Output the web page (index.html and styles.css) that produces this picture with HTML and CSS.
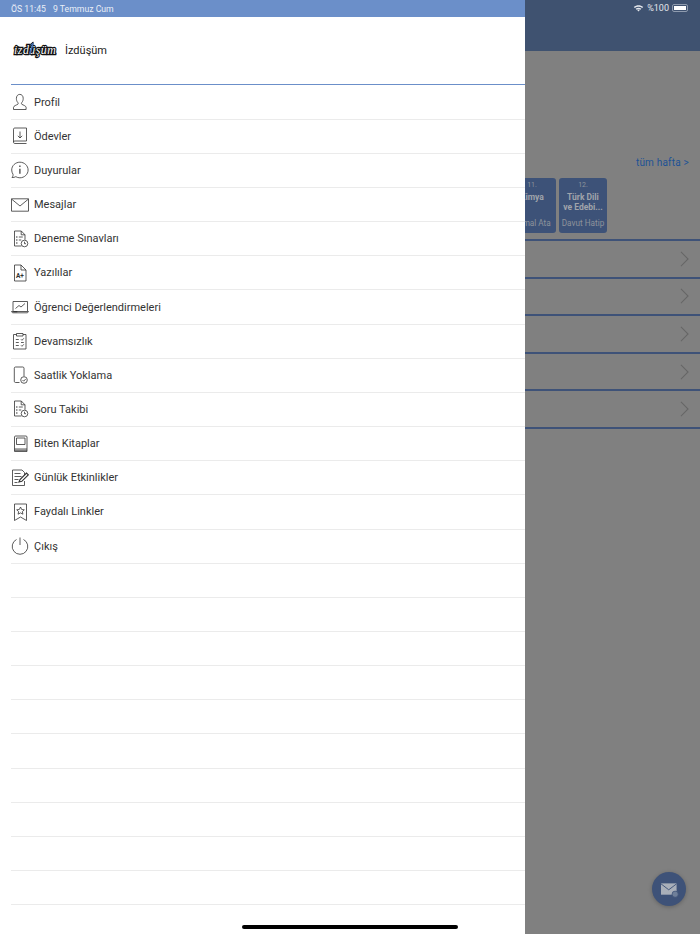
FILE: index.html
```html
<!DOCTYPE html>
<html lang="tr">
<head>
  <meta charset="UTF-8" />
  <meta name="viewport" content="width=device-width, initial-scale=1.0"/>
  <title>İzdüşüm</title>
  <link rel="stylesheet" href="styles.css">
</head>
<body>
  <div class="screen">

    <!-- arka plandaki sayfa -->
    <main class="page">
      <header class="page-top">
        <div class="status-right">
          <svg class="wifi" viewBox="0 0 14 10"><path d="M1 3.6C4.4.6 9.6.6 13 3.6l-1.3 1.4C9 2.8 5 2.8 2.3 5z"/><path d="M3.3 6c2.2-1.9 5.2-1.9 7.4 0L9.4 7.3c-1.4-1.1-3.4-1.1-4.8 0z"/><path d="M5.5 8 7 6.9 8.5 8 7 9.6z"/></svg>
          <span>%100</span>
          <span class="battery"><i></i></span>
        </div>
      </header>

      <a class="week-link">tüm hafta &gt;</a>

      <div class="lessons">
        <div class="lesson">
          <span class="lesson-no">11.</span>
          <strong>Kimya</strong>
          <span class="lesson-teacher">Kemal Ata</span>
        </div>
        <div class="lesson">
          <span class="lesson-no">12.</span>
          <strong>Türk Dili<br>ve Edebi...</strong>
          <span class="lesson-teacher">Davut Hatip</span>
        </div>
      </div>

      <div class="page-list">
        <div class="page-row"><svg viewBox="0 0 10 18"><path d="M1 1l8 8-8 8"/></svg></div>
        <div class="page-row"><svg viewBox="0 0 10 18"><path d="M1 1l8 8-8 8"/></svg></div>
        <div class="page-row"><svg viewBox="0 0 10 18"><path d="M1 1l8 8-8 8"/></svg></div>
        <div class="page-row"><svg viewBox="0 0 10 18"><path d="M1 1l8 8-8 8"/></svg></div>
        <div class="page-row"><svg viewBox="0 0 10 18"><path d="M1 1l8 8-8 8"/></svg></div>
      </div>
    </main>

    <button class="fab">
      <svg viewBox="0 0 20 18">
        <path class="fab-mail" d="M1 2.5h16.500v12H1z"/>
        <path class="fab-flap" d="M1 3l8.200 6.300L17.500 3"/>
        <circle class="fab-plus" cx="16" cy="14" r="3.300"/>
      </svg>
    </button>

    <!-- sol menü -->
    <aside class="drawer">
      <div class="status-left"><span>ÖS 11:45</span><span>9 Temmuz Cum</span></div>

      <div class="drawer-head">
        <svg class="logo" viewBox="0 0 46 20">
          <path class="logo-wing" d="M3 5l9 4 9-8-1 14-5-3-8 1z"/>
          <text class="logo-text" x="1" y="14">izdüşüm</text>
          <path class="logo-slash" d="M21 2 17.500 14"/>
        </svg>
        <span>İzdüşüm</span>
      </div>

      <ul class="menu">
        <li>
          <svg viewBox="0 0 18 18"><path d="M2.500 16.500v-2.200c0-1.300 3-2.300 4.300-3 .5-.3.500-1.300 0-1.800C5.700 8.300 5.400 6.800 5.400 5.300 5.400 3 6.800 1.400 8.800 1.400s3.400 1.600 3.400 3.900c0 1.500-.3 3-1.400 4.200-.5.500-.5 1.500 0 1.800 1.300.7 4.300 1.700 4.300 3v2.200z"/></svg>
          <span>Profil</span>
        </li>
        <li>
          <svg viewBox="0 0 18 18"><path d="M2.500 15V2.200C2.500 1.500 3 1 3.700 1h11.800v13H3.700c-.7 0-1.200.5-1.200 1.200s.5 1.300 1.200 1.300h11.800"/><path d="M9 4.500v6.500M6.800 8.800 9 11l2.200-2.200"/></svg>
          <span>Ödevler</span>
        </li>
        <li>
          <svg viewBox="0 0 18 18"><path d="M1 16.500c1-1.200 1.200-2.200 1-3.200C1.200 12 .7 10.600.7 9c0-4.300 3.700-7.800 8.200-7.800s8.200 3.500 8.200 7.800-3.700 7.800-8.200 7.800c-1.500 0-2.900-.4-4.100-1.100-1.100.6-2.400.9-3.800.8z"/><path class="heavy" d="M8.900 7.800v5M8.900 4.600v1.400"/></svg>
          <span>Duyurular</span>
        </li>
        <li>
          <svg viewBox="0 0 18 18"><path d="M.5 2.800h17v12.400H.5z"/><path d="M.7 3.200 9 10l8.300-6.800"/></svg>
          <span>Mesajlar</span>
        </li>
        <li>
          <svg viewBox="0 0 18 18"><path d="M10.500 16H3.500V1h6.800l3.700 3.800v5"/><path d="M10.200 1v3.800H14"/><path class="heavy" d="M5 7h1.500M5 10h1.500M5 13h1.500"/><path d="M7.800 7h4M7.800 10h2.500"/><circle cx="13.500" cy="13.500" r="3.300"/><path d="M13.500 11.700v2h1.500"/></svg>
          <span>Deneme Sınavları</span>
        </li>
        <li>
          <svg viewBox="0 0 18 18"><path d="M3.500 17V1h6.500l5 5v11z"/><path d="M10 1v5h5"/><text class="icon-text" x="5" y="14">A+</text></svg>
          <span>Yazılılar</span>
        </li>
        <li>
          <svg viewBox="0 0 18 18"><path d="M2 13V3.500h14.500V13"/><path d="M.5 13.500h17l-1 1.300H1.500z"/><path class="heavy" d="M2.300 13.700h4"/><path d="M4.500 10.500 8 7.500l2 1.500 4-3.500"/></svg>
          <span>Öğrenci Değerlendirmeleri</span>
        </li>
        <li>
          <svg viewBox="0 0 18 18"><path d="M5.500 2.500H2.500v14.500h12.500V2.500h-3"/><path d="M5.500 1.500h6.500v2.500H5.500z"/><path d="M4.800 7.500h3M4.800 10.500h3M4.800 13.500h3M10 7.300l1 1 1.800-2M10 13.300l1 1 1.800-2M10 10.500h2.800"/></svg>
          <span>Devamsızlık</span>
        </li>
        <li>
          <svg viewBox="0 0 18 18"><path d="M8.500 16.500H4.500c-.7 0-1.200-.5-1.200-1.200V2.200C3.300 1.500 3.800 1 4.500 1h7.300c.7 0 1.200.5 1.200 1.200v8"/><circle cx="13" cy="14" r="3.300"/><path d="M11.500 14l1.200 1.200 2-2.200"/></svg>
          <span>Saatlik Yoklama</span>
        </li>
        <li>
          <svg viewBox="0 0 18 18"><path d="M10.500 16H3.500V1h6.800l3.700 3.800v5"/><path d="M10.200 1v3.800H14"/><path class="heavy" d="M5 7h1.500M5 10h1.500M5 13h1.500"/><path d="M7.800 7h4M7.800 10h2.500"/><circle cx="13.500" cy="13.500" r="3.300"/><path d="M13.500 11.700v2h1.500"/></svg>
          <span>Soru Takibi</span>
        </li>
        <li>
          <svg viewBox="0 0 18 18"><path d="M3.500 14V2c0-.6.400-1 1-1h10.500c.6 0 1 .4 1 1v12z"/><path d="M5.500 3h8.500v6.500H5.500z"/><path d="M3.500 14v2.500h12.500V14M3.500 15.300h12.500"/></svg>
          <span>Biten Kitaplar</span>
        </li>
        <li>
          <svg viewBox="0 0 18 18"><path d="M13.500 6V3.500L11 1H1.500v15.500h12V12"/><path d="M3.500 4.500h6M3.500 7.500h7M3.500 10.500h4M3.500 13.500h3"/><path class="heavy" d="M8 13l1-2.500 6.500-6.500 1.800 1.800-6.500 6.500z"/></svg>
          <span>Günlük Etkinlikler</span>
        </li>
        <li>
          <svg viewBox="0 0 18 18"><path d="M3.500 1h12v16.500l-6-3.500-6 3.500z"/><path d="M9.500 4l1.200 2.500 2.600.3-1.900 1.800.5 2.600-2.400-1.300-2.400 1.300.5-2.600-1.900-1.800 2.600-.3z"/></svg>
          <span>Faydalı Linkler</span>
        </li>
        <li>
          <svg viewBox="0 0 18 18"><path d="M5.500 2.500a7.800 7.800 0 1 0 7 0"/><path d="M9 .5v7.500"/></svg>
          <span>Çıkış</span>
        </li>
        <li></li><li></li><li></li><li></li><li></li>
        <li></li><li></li><li></li><li></li><li></li>
      </ul>
    </aside>

    <div class="home-bar"></div>
  </div>
</body>
</html>
```

FILE: styles.css
```css
body {
  margin: 0;
  padding: 0;
  background-color: #808080;
  font-family: Roboto, Inter, "Noto Sans", Arial, sans-serif;
}

.screen {
  position: relative;
  width: 700px;
  height: 934px;
  overflow: hidden;
  background-color: #808080;
}

/* Arka plan */
.page-top {
  height: 51px;
  background-color: #3f5270;
  box-sizing: border-box;
  padding: 2px 12px 0 0;
}

.status-right {
  display: flex;
  justify-content: flex-end;
  align-items: center;
  gap: 3px;
  height: 12px;
  color: #e3e6eb;
  font-size: 9px;
}

.wifi {
  width: 11px;
  height: 8px;
  fill: #e3e6eb;
}

.battery {
  display: block;
  width: 16px;
  height: 8px;
  padding: 1px;
  border: 1px solid #8f9bae;
  border-radius: 2px;
  box-sizing: border-box;
}

.battery i {
  display: block;
  height: 100%;
  background-color: #fff;
}

.week-link {
  display: block;
  margin-top: 105px;
  padding-right: 11px;
  height: 22px;
  text-align: right;
  font-size: 10px;
  line-height: 13px;
  letter-spacing: 0.2px;
  color: #1c5296;
}

.lessons {
  display: flex;
  justify-content: flex-end;
  gap: 3px;
  padding-right: 93px;
}

.lesson {
  width: 48px;
  height: 55px;
  box-sizing: border-box;
  padding: 2px 2px 0;
  border-radius: 3px;
  background-color: #3d5278;
  color: #8e939b;
  text-align: center;
  font-size: 8.2px;
  line-height: 10px;
  display: flex;
  flex-direction: column;
  align-items: center;
}

.lesson-no {
  font-size: 7px;
}

.lesson strong {
  font-size: 8.5px;
  line-height: 10px;
  height: 21px;
  margin-top: 2px;
  color: #a0a4ab;
  white-space: nowrap;
}

.lesson-teacher {
  margin-top: 5px;
  white-space: nowrap;
}

.page-list {
  margin-top: 6px;
  border-top: 2px solid #3e5278;
}

.page-row {
  height: 35.6px;
  border-bottom: 2px solid #3e5278;
  display: flex;
  justify-content: flex-end;
  align-items: center;
  padding-right: 11px;
}

.page-row svg {
  width: 9px;
  height: 16px;
  fill: none;
  stroke: #666;
  stroke-width: 1.2;
}

.fab {
  position: absolute;
  right: 14px;
  bottom: 28px;
  width: 34px;
  height: 34px;
  padding: 0;
  border: none;
  border-radius: 50%;
  background-color: #3e5278;
  box-shadow: 0 1px 4px rgba(0,0,0,0.25);
  display: flex;
  align-items: center;
  justify-content: center;
}

.fab svg {
  width: 19px;
  height: 17px;
}

.fab-mail {
  fill: #a9afb9;
}

.fab-flap {
  fill: none;
  stroke: #3e5278;
  stroke-width: 1;
}

.fab-plus {
  fill: #6f7f99;
  stroke: #3e5278;
  stroke-width: 0.8;
}

/* Sol menü */
.drawer {
  position: absolute;
  top: 0;
  left: 0;
  bottom: 0;
  width: 525px;
  background-color: #fff;
  color: #333;
}

.status-left {
  height: 17px;
  background-color: #6b8fc9;
  color: #e9eef7;
  display: flex;
  align-items: center;
  gap: 7px;
  padding-left: 11px;
  font-size: 8.7px;
}

.drawer-head {
  height: 68px;
  margin-left: 11px;
  box-sizing: border-box;
  border-bottom: 1px solid #6b8fc9;
  display: flex;
  align-items: center;
  gap: 8px;
  padding: 0 0 0 2px;
  font-size: 11px;
  color: #222;
}

.logo {
  width: 44px;
  height: 19px;
}

.logo-wing {
  fill: #3f6fb5;
  stroke: #111;
  stroke-width: 1;
}

.logo-slash {
  fill: none;
  stroke: #3f6fb5;
  stroke-width: 1.6;
}

.logo-text {
  font-family: "Liberation Serif", serif;
  font-style: italic;
  font-size: 12.5px;
  letter-spacing: 0.5px;
  fill: #fff;
  stroke: #111;
  stroke-width: 2.4;
  paint-order: stroke;
}

.menu {
  list-style: none;
  margin: 0 0 0 11px;
  padding: 0.5px 0 0;
}

.menu li {
  height: 34.17px;
  box-sizing: border-box;
  border-bottom: 1px solid #ebebeb;
  display: flex;
  align-items: center;
  gap: 5px;
  font-size: 11px;
}

.menu svg {
  width: 18px;
  height: 18px;
  fill: none;
  stroke: #333;
  stroke-width: 0.8;
  flex-shrink: 0;
}

.menu .heavy {
  stroke-width: 1.2;
}

.icon-text {
  font-size: 6.5px;
  font-weight: bold;
  fill: #333;
  stroke: none;
}

.home-bar {
  position: absolute;
  left: 242px;
  bottom: 5px;
  width: 216px;
  height: 4px;
  border-radius: 2px;
  background-color: #000;
}
```
